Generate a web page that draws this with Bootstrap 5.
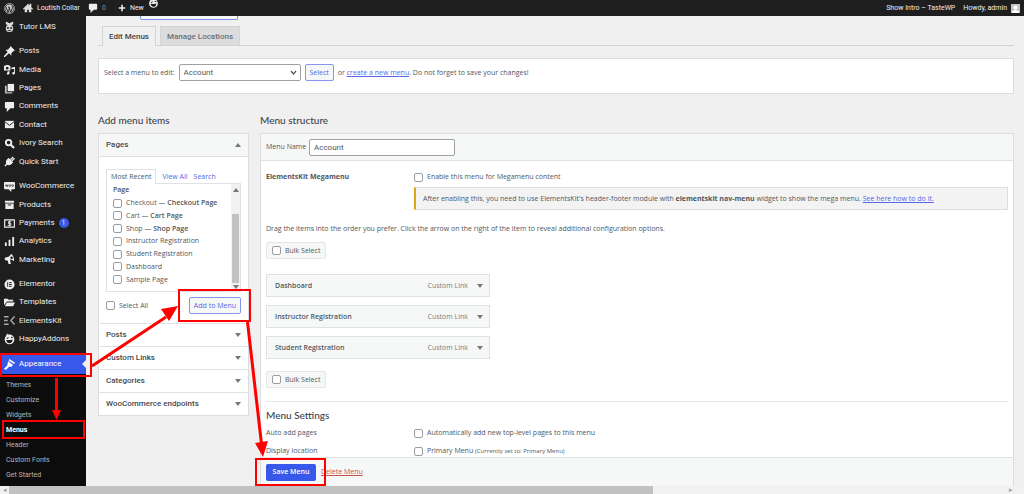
<!DOCTYPE html>
<html lang="en">
<head>
<meta charset="utf-8">
<meta name="viewport" content="width=device-width, initial-scale=1">
<title>Menus – Loutish Collar</title>
<link href="https://cdn.jsdelivr.net/npm/bootstrap@5.3.0/dist/css/bootstrap.min.css" rel="stylesheet">
<style>
body{font:7px/12px Roboto,"Noto Sans",sans-serif;color:#50575e;background:#f0f0f1}
a{color:#5468e8}
svg{display:block;flex:none}
.adminbar{height:16px;background:#1e1e1e;color:#eee;padding:0 4px}
.adminbar a,.side a{color:#eee;text-decoration:none}
.adminbar .zero{color:#8c8f94}
.face{left:148px;top:-2px}
.side{width:86px;background:#1e1e1e;font-size:8px}
.grp{margin-bottom:6px}
.grp a,.current{display:flex;align-items:center;gap:4px;padding-left:4px;white-space:nowrap}
.grp a{flex:1}
.g1{height:18px;margin-top:2px}.g5{height:92px}.g7{height:129px}.g4{height:73px}
.side .current{height:20px;background:#3858e9;color:#fff;position:relative}
.current::after{content:"";position:absolute;right:0;border:4px solid transparent;border-right-color:#f0f0f1}
.sub{background:#0c0c0c;padding-top:4px;font-size:7px}
.side .sub a{display:block;line-height:15px;padding-left:6px;color:#b5b7ba}
.side .sub a.on{color:#fff;font-weight:700}
.count{background:#3858e9;border-radius:5px;width:10px;height:10px;font-size:7px;line-height:10px;text-align:center}
.content-area{padding:0 10px 0 12px;min-width:0;font-family:"Open Sans",Roboto,sans-serif}
.ghost{width:98px;height:4px;margin-left:42px;border:1px solid #7d8cf0;border-top:0;border-radius:0 0 2px 2px;background:#f6f7f7}
.tabs{margin-top:6px;border-bottom:1px solid #d3d4d6;padding-left:4px;gap:4px;height:20px}
.tabs a{border:1px solid #d3d4d6;border-bottom:0;background:#dcdcde;color:#6b7075;font-size:8px;font-family:Roboto,sans-serif;font-weight:500;line-height:19px;padding:0 6px;text-decoration:none}
.tabs a.on{background:#f0f0f1;color:#444;height:20px}
.box{background:#fff;border:1px solid #dcdde0}
.chooser{margin-top:12px;height:36px;padding:5px;gap:4px;align-items:flex-start}
.chooser>*{line-height:17px}
.field{border:1px solid #9da1a5;border-radius:2px;background:#fff;color:#50575e;font-family:Roboto,sans-serif;font-size:8px;padding:0 4px;height:17px;line-height:15px}
.pick{width:122px;appearance:none}
.menu-name{width:146px}
.chev{right:4px;top:6px;pointer-events:none}
.btn-wp{height:17px;border:1px solid #8595ee;border-radius:2px;background:#f6f7f7;color:#5468e8;padding:0 4px;line-height:15px}
h2{font-family:Lato,sans-serif;font-size:10px;line-height:14px;font-weight:500;color:#3c434a;margin:0}
.cols{margin-top:19px;gap:11px}
.left{width:151px}
.cols>div>h2{margin-bottom:6px}
.acc{height:23px;border:0;border-top:1px solid #e0e1e3;background:#fff;padding:0 7px;font-family:Roboto,sans-serif;font-size:8px;font-weight:500;color:#444a50;width:100%}
.acc.open{background:#f6f7f7;border-top:0;border-bottom:1px solid #e0e1e3}
.tri{width:0;border:2px solid transparent;border-top:4px solid #777;border-bottom:0;border-left-width:3px;border-right-width:3px}
.tri.up{border-top:0;border-bottom:4px solid #777}
.pane{padding:12px 7px 8px;height:166px}
.minitabs{gap:6px;height:14px;position:relative;z-index:1}
.minitabs a{text-decoration:none;line-height:15px;white-space:nowrap}
.minitabs a.on{border:1px solid #e0e1e3;border-bottom:0;background:#fff;color:#50575e;padding:0 4px;height:15px;line-height:14px}
.listbox{border:1px solid #e0e1e3;height:109px}
.listbox label,.listbox b{display:flex;align-items:center;flex:1;gap:4px;white-space:nowrap}
.listbox b,.listbox strong{font-weight:600}
.rows{padding:0 6px 5px}
.adder{margin-top:5px}
input[type=checkbox]{appearance:none;width:9px;height:9px;border:1px solid #999da1;border-radius:2px;background:#fff;margin:0;flex:none}
input[type=checkbox]:checked{background:#3858e9}
.vbar{width:9px;background:#f1f1f1;padding:4px 0 2px}
.vbar .thumb{width:7px;height:70px;background:#c1c1c1;margin:22px 0 2px}
.namebar{height:27px;background:#f6f7f7;border-bottom:1px solid #e0e1e3;padding:0 5px;gap:4px}
.name-label{width:39px;white-space:nowrap}
.inner{padding:10px 5px 0}
.lab{width:148px;flex:none}
.opt{display:flex;align-items:center;gap:4px}
.note{margin:4px 0 0 148px;border:1px solid #dcdde0;border-left:2px solid #dba617;background:#f3f3f4;line-height:21px;padding-left:7px;white-space:nowrap}
.drag{margin:13px 0 7px}
.bulk{display:inline-flex;align-items:center;gap:4px;height:17px;width:60px;border:1px solid #e3e5e6;border-radius:2px;background:#f6f7f7;padding:0 5px;white-space:nowrap}
.bulk-row{height:17px;display:flex}
.items{width:224px;margin:15px 0 12px;gap:8px}
.item{height:23px;border:1px solid #dfe1e3;background:#f6f7f7;padding:0 6px 0 8px;font-weight:600}
.item span{font-weight:400;color:#7b8085;margin-left:auto;margin-right:9px}
.settings{border-top:1px solid #e6e7e9;padding-top:6px;margin-top:13px}
.settings h2{margin-bottom:5px}
.set{height:18px}
.tiny{font-size:6px}
.foot{height:29px;border-top:1px solid #e0e1e3;background:#f6f7f7;padding:0 5px;gap:5px}
.save{background:#3858e9;color:#fff;border:0;border-radius:2px;width:50px;height:17px;font-weight:600;padding:0}
.foot a{color:#c75252}
.hbar{height:8px;background:#f1f1f1;padding-right:9px}
.hbar .arrow{width:9px;color:#a0a0a0;line-height:8px;text-align:center}
.hbar .thumb{width:63.4%;background:#c1c1c1}
.marks{position:absolute;left:0;top:0;z-index:5;pointer-events:none}
</style>
</head>
<body class="d-flex flex-column min-vh-100 position-relative">
<svg width="0" height="0" class="position-absolute" aria-hidden="true">
<symbol id="comment" viewBox="0 0 12 12"><path fill="#eee" d="M2 1h8q1 0 1 1v5q0 1-1 1H7l-4 4V8H2Q1 8 1 7V2q0-1 1-1"/></symbol>
<symbol id="smile" viewBox="0 0 12 12"><circle cx="6" cy="6.500" r="5.300" fill="#eee"/><path fill="#eee" d="M2 3 3.500 0l2 2z"/><path d="M3 5.500l2-1M7.500 4l2 .5" stroke="#1e1e1e" stroke-width="1.200"/><path d="M2.500 7q3.500.500 7-.5-.5 4-3.500 4T2.500 7" fill="#1e1e1e"/></symbol>
</svg>
<header class="adminbar d-flex align-items-center position-relative">
<svg width="11" height="11" viewBox="0 0 24 24"><circle cx="12" cy="12" r="11" fill="none" stroke="#ccc" stroke-width="1.500"/><circle cx="12" cy="12" r="9" fill="#ccc"/><path d="M4 8l5 12 3-9-1-3M10 8l5 12 4-11-2-3" fill="none" stroke="#1e1e1e" stroke-width="2"/></svg>
<a href="#" class="d-flex align-items-center ms-2"><svg class="me-1" width="10" height="10" viewBox="0 0 12 12"><path fill="#ddd" d="M6 1 0 7l1 1 1-1v4h3V8h2v3h3V7l1 1 1-1-2-2V1H8v2z"/></svg>Loutish Collar</a>
<a href="#" class="d-flex align-items-center ms-2"><svg class="me-1" width="10" height="10"><use href="#comment"/></svg><span class="zero">0</span></a>
<a href="#" class="d-flex align-items-center ms-2 ps-1"><svg class="me-1" width="8" height="8" viewBox="0 0 10 10"><path d="M5 1v8M1 5h8" stroke="#eee" stroke-width="2"/></svg>New</a>
<svg class="face position-absolute" width="11" height="10"><use href="#smile"/></svg>
<a href="#" class="ms-auto me-2">Show Intro – TasteWP</a><a href="#" class="d-flex align-items-center">Howdy, admin<svg class="ms-1" width="9" height="9" viewBox="0 0 9 9"><path fill="#c5c5c5" d="M0 0h9v9H0z"/><circle cx="4.500" cy="3.500" r="2" fill="#fff"/><path d="M1 9q0-3 3.500-3T8 9" fill="#fff"/></svg></a>
</header>
<div class="d-flex flex-fill">
<nav class="side d-flex flex-column flex-shrink-0">
<div class="grp g1 d-flex flex-column"><a href="#"><svg width="11" height="12" viewBox="0 0 12 12"><path fill="#ddd" d="M2 0l4 2 4-2v3L6 5 2 3z"/><circle cx="6" cy="7.500" r="4" fill="#ddd"/><circle cx="4.300" cy="7" r="1.100" fill="#1e1e1e"/><circle cx="7.700" cy="7" r="1.100" fill="#1e1e1e"/><path d="M4 10h4" stroke="#1e1e1e"/></svg>Tutor LMS</a></div>
<div class="grp g7 d-flex flex-column">
<a href="#"><svg width="11" height="11" viewBox="0 0 12 12"><path fill="#eee" d="M7 0l5 5-1.500.5L8 8v2.500L5.500 8 1 12 0 12v-1L4 6.500 1.500 4H4l2.500-2.500z"/></svg>Posts</a>
<a href="#"><svg width="11" height="11" viewBox="0 0 12 12"><path fill="#eee" d="M0 2h1.500L2 1h3l.5 1H7v5H0zM8 4l4-1v7q0 1-1.500 1.500T9 10t2-1V5.500H8zM4 8h2v2q0 1.500-1.500 1.500T3 10.500 4 9z"/><circle cx="3.500" cy="4.500" r="1.400" fill="#1e1e1e"/></svg>Media</a>
<a href="#"><svg width="11" height="11" viewBox="0 0 12 12"><path fill="#eee" d="M4 1h7v8H4z"/><path fill="#bbb" d="M1 3h2v7h6v1.500H1z"/></svg>Pages</a>
<a href="#"><svg width="11" height="11"><use href="#comment"/></svg>Comments</a>
<a href="#"><svg width="11" height="11" viewBox="0 0 12 12"><path fill="#eee" d="M1 2h10v8H1z"/><path d="M1 3l5 4 5-4" fill="none" stroke="#1e1e1e"/></svg>Contact</a>
<a href="#"><svg width="11" height="11" viewBox="0 0 12 12"><circle cx="5" cy="5" r="3" fill="none" stroke="#eee" stroke-width="2"/><path d="M7 7l4 4" stroke="#eee" stroke-width="2.400"/></svg>Ivory Search</a>
<a href="#"><svg width="11" height="11" viewBox="0 0 12 12"><path d="M7 4l3-3M8.500 5.500l3-3M1 11l3-3" stroke="#eee" stroke-width="1.500"/><path fill="#eee" d="M5 2l5 5-2 2q-3 2-5 0T3 4z"/></svg>Quick Start</a>
</div>
<div class="grp g5 d-flex flex-column">
<a href="#"><svg width="11" height="11" viewBox="0 0 12 12"><path fill="#eee" d="M1 1h10q1 0 1 1v6q0 1-1 1H8v3L5 9H1Q0 9 0 8V2q0-1 1-1"/><path d="M1.500 4l.8 2 .8-2 .8 2 .5-2" fill="none" stroke="#1e1e1e" stroke-width=".7"/><circle cx="6.500" cy="5" r="1" fill="none" stroke="#1e1e1e" stroke-width=".7"/><circle cx="9.500" cy="5" r="1" fill="none" stroke="#1e1e1e" stroke-width=".7"/></svg>WooCommerce</a>
<a href="#"><svg width="11" height="11" viewBox="0 0 12 12"><path fill="#eee" d="M1 2h10v2H1zM1.500 5h9v6h-9z"/><path d="M4 6.500h4" stroke="#1e1e1e"/></svg>Products</a>
<a href="#"><svg width="11" height="11" viewBox="0 0 12 12"><path fill="none" stroke="#eee" stroke-width="1.300" d="M.7 2h10.600v8H.7z"/><path d="M8 4H5v2h2.500v2H4M6 3v6" fill="none" stroke="#eee"/></svg>Payments <span class="count">1</span></a>
<a href="#"><svg width="11" height="11" viewBox="0 0 12 12"><path fill="#eee" d="M1 7h2v4H1zM5 4h2v7H5zM9 1h2v10H9z"/></svg>Analytics</a>
<a href="#"><svg width="11" height="11" viewBox="0 0 12 12"><path fill="#eee" d="M8 0q3 2 3 8-2-2-4-2l-.500 0 1 5H5L4 7H2Q0 6 1 4l4-1z"/><circle cx="8.300" cy="4" r="1.400" fill="#1e1e1e"/></svg>Marketing</a>
</div>
<div class="grp g4 d-flex flex-column">
<a href="#"><svg width="11" height="11" viewBox="0 0 12 12"><circle cx="6" cy="6" r="5.500" fill="#eee"/><path d="M4 3.500v5M5.500 4h3M5.500 6h3M5.500 8h3" stroke="#1e1e1e"/></svg>Elementor</a>
<a href="#"><svg width="11" height="11" viewBox="0 0 12 12"><path fill="#eee" d="M0 2h4l1 1h5v2H3L0 9zM3 6h9l-2 4H1z"/></svg>Templates</a>
<a href="#"><svg width="11" height="11" viewBox="0 0 12 12"><path d="M0 2h5M0 6h4M0 10h5M11.500 1.500 7.500 6l4 4.500" fill="none" stroke="#aaa" stroke-width="1.600"/></svg>ElementsKit</a>
<a href="#"><svg width="11" height="12"><use href="#smile"/></svg>HappyAddons</a>
</div>
<a href="#" class="current"><svg width="11" height="11" viewBox="0 0 12 12"><path fill="#fff" d="M6 0l6 4-1 1.500L5 1.500zM4.500 2.500l5.500 4-2 2H5.500L2 12 0 10.500 3.500 7z"/></svg>Appearance</a>
<div class="sub flex-fill"><a href="#">Themes</a><a href="#">Customize</a><a href="#">Widgets</a><a href="#" class="on">Menus</a><a href="#">Header</a><a href="#">Custom Fonts</a><a href="#">Get Started</a></div>
</nav>
<main class="content-area flex-fill d-flex flex-column">
<div class="ghost"></div>
<nav class="tabs d-flex"><a href="#" class="on">Edit Menus</a><a href="#">Manage Locations</a></nav>
<form class="box chooser d-flex">
<label for="pick">Select a menu to edit:</label>
<div class="position-relative"><select id="pick" class="field pick"><option>Account</option></select><svg class="chev position-absolute" width="7" height="6" viewBox="0 0 7 6"><path d="M1 1l2.500 3L6 1" fill="none" stroke="#555" stroke-width="1.200"/></svg></div>
<button type="button" class="btn-wp">Select</button>
<span>or <a href="#">create a new menu</a>. Do not forget to save your changes!</span>
</form>
<div class="cols d-flex flex-fill">
<div class="left flex-shrink-0"><h2>Add menu items</h2>
<div class="box">
<button class="acc open d-flex align-items-center justify-content-between">Pages<i class="tri up"></i></button>
<div class="pane">
<div class="minitabs d-flex"><a href="#" class="on">Most Recent</a><a href="#">View All</a><a href="#">Search</a></div>
<div class="listbox d-flex"><div class="rows flex-fill d-flex flex-column"><b>Page</b>
<label><input type="checkbox"><span>Checkout — <strong>Checkout Page</strong></span></label>
<label><input type="checkbox"><span>Cart — <strong>Cart Page</strong></span></label>
<label><input type="checkbox"><span>Shop — <strong>Shop Page</strong></span></label>
<label><input type="checkbox">Instructor Registration</label>
<label><input type="checkbox">Student Registration</label>
<label><input type="checkbox">Dashboard</label>
<label><input type="checkbox">Sample Page</label></div>
<div class="vbar d-flex flex-column align-items-center"><i class="tri up"></i><div class="thumb"></div><i class="tri"></i></div></div>
<div class="adder d-flex justify-content-between align-items-center"><label class="opt"><input type="checkbox">Select All</label><button class="btn-wp">Add to Menu</button></div>
</div>
<button class="acc d-flex align-items-center justify-content-between">Posts<i class="tri"></i></button>
<button class="acc d-flex align-items-center justify-content-between">Custom Links<i class="tri"></i></button>
<button class="acc d-flex align-items-center justify-content-between">Categories<i class="tri"></i></button>
<button class="acc d-flex align-items-center justify-content-between">WooCommerce endpoints<i class="tri"></i></button>
</div></div>
<div class="flex-fill d-flex flex-column"><h2>Menu structure</h2>
<div class="box flex-fill d-flex flex-column border-bottom-0">
<div class="namebar d-flex align-items-center"><label class="name-label" for="nm">Menu Name</label><input id="nm" class="field menu-name" value="Account"></div>
<div class="inner flex-fill">
<div class="d-flex"><strong class="lab">ElementsKit Megamenu</strong><label class="opt"><input type="checkbox">Enable this menu for Megamenu content</label></div>
<div class="note">After enabling this, you need to use ElementsKit's header-footer module with <strong>elementskit nav-menu</strong> widget to show the mega menu. <a href="#">See here how to do it.</a></div>
<p class="drag">Drag the items into the order you prefer. Click the arrow on the right of the item to reveal additional configuration options.</p>
<div class="bulk-row"><label class="bulk"><input type="checkbox">Bulk Select</label></div>
<div class="items d-flex flex-column">
<div class="item d-flex align-items-center">Dashboard<span>Custom Link</span><i class="tri"></i></div>
<div class="item d-flex align-items-center">Instructor Registration<span>Custom Link</span><i class="tri"></i></div>
<div class="item d-flex align-items-center">Student Registration<span>Custom Link</span><i class="tri"></i></div>
</div>
<div class="bulk-row"><label class="bulk"><input type="checkbox">Bulk Select</label></div>
<div class="settings"><h2>Menu Settings</h2>
<div class="set d-flex"><span class="lab">Auto add pages</span><label class="opt align-self-start"><input type="checkbox">Automatically add new top-level pages to this menu</label></div>
<div class="d-flex"><span class="lab">Display location</span><label class="opt"><input type="checkbox"><span>Primary Menu <span class="tiny">(Currently set to: Primary Menu)</span></span></label></div>
</div></div>
<div class="foot d-flex align-items-center"><button class="save">Save Menu</button><a href="#">Delete Menu</a></div>
</div></div>
</div>
</main>
</div>
<div class="hbar d-flex"><span class="arrow">◂</span><div class="thumb"></div><span class="arrow ms-auto me-n2">▸</span></div>
<svg class="marks" width="330" height="494" viewBox="0 0 330 494" aria-hidden="true">
<g fill="none" stroke="#f00" stroke-width="2"><path d="M1 354h90v22H1zM3 421h81v17H3zM179 290h71v31h-71zM256 459h69v26h-69z"/><path d="M92 366l74-49M56.500 378v34M247.500 322l14 122" stroke-width="3"/></g>
<path fill="#f00" d="M178 306l-9 15-8-12zM52 410h9l-4.500 10zM255 443l13-2-5 16z"/></svg>
<script src="https://cdn.jsdelivr.net/npm/bootstrap@5.3.0/dist/js/bootstrap.bundle.min.js"></script>
</body>
</html>
